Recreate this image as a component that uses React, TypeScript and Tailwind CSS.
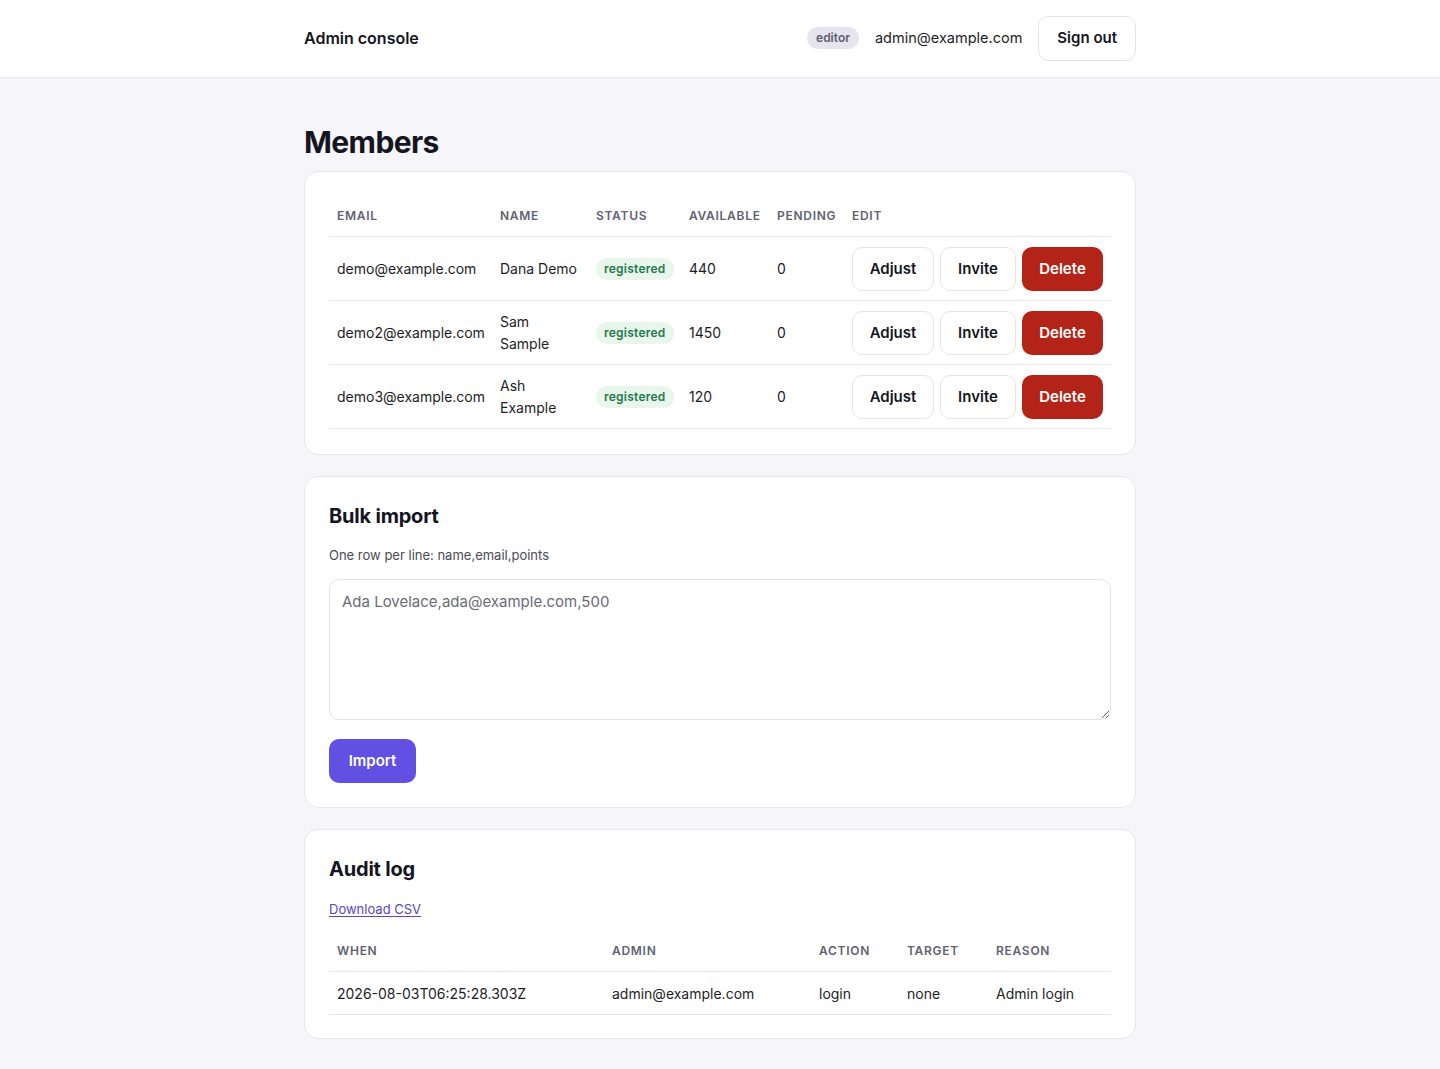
const members = [
  { email: "demo@example.com", name: "Dana Demo", available: 440, pending: 0 },
  { email: "demo2@example.com", name: "Sam Sample", available: 1450, pending: 0 },
  { email: "demo3@example.com", name: "Ash Example", available: 120, pending: 0 },
];

const audit = [
  {
    when: "2026-08-03T06:25:28.303Z",
    admin: "admin@example.com",
    action: "login",
    target: "none",
    reason: "Admin login",
  },
];

const th =
  "px-2 py-3 text-left text-[12px] leading-4 font-semibold uppercase tracking-[0.06em] text-[#5f6270]";
const td = "px-2 py-[9.5px] align-middle";
const auditTd = "px-2 pt-[11px] pb-[9px]";

export default function App() {
  return (
    <div
      className="min-h-screen bg-[#f6f6fa] text-[14px] text-[#1d1d26]"
      style={{ fontFamily: "Inter, 'Noto Sans', sans-serif" }}
    >
      <header className="bg-white border-b border-[#e6e6ec]">
        <div className="mx-auto w-[832px] h-[77px] pb-px flex items-center justify-between">
          <div className="text-[16px] font-semibold text-[#15151f]">Admin console</div>
          <div className="flex items-center gap-4">
            <span className="rounded-full bg-[#e6e4ee] px-[9px] py-[2px] text-[12px] font-semibold text-[#5c5c6c]">
              editor
            </span>
            <span className="text-[14.5px]">admin@example.com</span>
            <button className="h-[45px] px-[18px] rounded-[10px] border border-[#e3e3ea] bg-white text-[15px] font-semibold text-[#15151f]">
              Sign out
            </button>
          </div>
        </div>
      </header>

      <main className="mx-auto w-[832px] pt-[44px] pb-8">
        <h1 className="text-[30px] leading-[40px] font-bold tracking-[-0.02em] text-[#15151f] mb-[9px]">
          Members
        </h1>

        <div className="flex flex-col gap-[21px]">
          <section className="bg-white border border-[#e6e6ec] rounded-[14px] p-6 pb-[25px]">
            <table className="w-full table-fixed border-collapse">
              <colgroup>
                <col className="w-[163px]" />
                <col className="w-[96px]" />
                <col className="w-[93px]" />
                <col className="w-[88px]" />
                <col className="w-[75px]" />
                <col />
              </colgroup>
              <thead>
                <tr className="border-b border-[#e6e6ec]">
                  <th className={th}>Email</th>
                  <th className={th}>Name</th>
                  <th className={th}>Status</th>
                  <th className={th}>Available</th>
                  <th className={th}>Pending</th>
                  <th className={th}>Edit</th>
                </tr>
              </thead>
              <tbody className="leading-[22px]">
                {members.map((m) => (
                  <tr key={m.email} className="border-b border-[#e6e6ec]">
                    <td className={td}>{m.email}</td>
                    <td className={td}>{m.name}</td>
                    <td className={td}>
                      <span className="inline-block rounded-full bg-[#e9f6ee] px-2 py-[2px] text-[12px] leading-[18px] font-semibold tracking-[0.02em] text-[#1f7a48]">
                        registered
                      </span>
                    </td>
                    <td className={td}>{m.available}</td>
                    <td className={td}>{m.pending}</td>
                    <td className={td}>
                      <div className="flex gap-[6px]">
                        <button className="h-11 w-[82px] rounded-[10px] border border-[#e3e3ea] bg-white text-[15px] font-semibold text-[#15151f]">
                          Adjust
                        </button>
                        <button className="h-11 w-[76px] rounded-[10px] border border-[#e3e3ea] bg-white text-[15px] font-semibold text-[#15151f]">
                          Invite
                        </button>
                        <button className="h-11 w-[81px] rounded-[10px] bg-[#b42318] text-[15px] font-semibold text-white">
                          Delete
                        </button>
                      </div>
                    </td>
                  </tr>
                ))}
              </tbody>
            </table>
          </section>

          <section className="bg-white border border-[#e6e6ec] rounded-[14px] p-6">
            <h2 className="text-[20px] leading-[30px] font-bold tracking-[-0.01em] text-[#15151f]">
              Bulk import
            </h2>
            <p className="mt-[14px] text-[13px] leading-5 text-[#4a4a58]">
              One row per line: name,email,points
            </p>
            <textarea
              className="mt-[14px] block w-full h-[141px] rounded-[10px] border border-[#e3e3ea] px-3 py-[10px] text-[15px] leading-6 placeholder:text-[#6b6b76] outline-none"
              placeholder="Ada Lovelace,ada@example.com,500"
            />
            <button className="mt-[19px] h-11 w-[87px] rounded-[10px] bg-[#6150e2] text-[15px] font-semibold text-white">
              Import
            </button>
          </section>

          <section className="bg-white border border-[#e6e6ec] rounded-[14px] p-6 pb-[23px]">
            <h2 className="text-[20px] leading-[30px] font-bold tracking-[-0.01em] text-[#15151f]">
              Audit log
            </h2>
            <a
              href="#"
              className="mt-[15px] block w-fit text-[13px] leading-5 text-[#5646c8] underline underline-offset-2"
            >
              Download CSV
            </a>
            <table className="mt-[12px] w-full table-fixed border-collapse">
              <colgroup>
                <col className="w-[275px]" />
                <col className="w-[207px]" />
                <col className="w-[88px]" />
                <col className="w-[89px]" />
                <col />
              </colgroup>
              <thead>
                <tr className="border-b border-[#e6e6ec]">
                  <th className={th}>When</th>
                  <th className={th}>Admin</th>
                  <th className={th}>Action</th>
                  <th className={th}>Target</th>
                  <th className={th}>Reason</th>
                </tr>
              </thead>
              <tbody className="leading-[22px]">
                {audit.map((a) => (
                  <tr key={a.when} className="border-b border-[#e6e6ec]">
                    <td className={auditTd}>{a.when}</td>
                    <td className={auditTd}>{a.admin}</td>
                    <td className={auditTd}>{a.action}</td>
                    <td className={auditTd}>{a.target}</td>
                    <td className={auditTd}>{a.reason}</td>
                  </tr>
                ))}
              </tbody>
            </table>
          </section>
        </div>
      </main>
    </div>
  );
}
